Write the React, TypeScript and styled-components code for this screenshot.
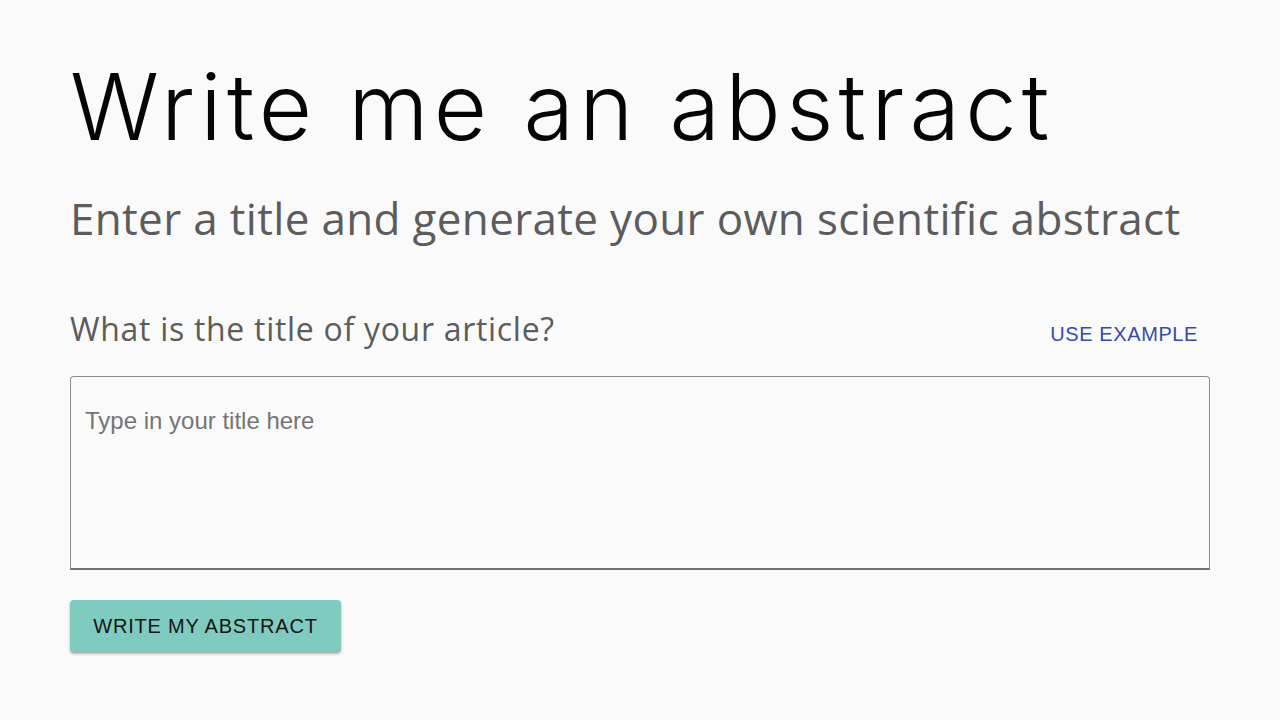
import React from "react";
import styled, { createGlobalStyle } from "styled-components";

const Global = createGlobalStyle`
  html, body { margin: 0; padding: 0; background: #fafafa; }
  body { width: 1280px; height: 720px; overflow: hidden; }
`;

const Page = styled.main`
  box-sizing: border-box;
  width: 1280px;
  height: 720px;
  padding: 52px 70px 0 70px;
  display: flex;
  flex-direction: column;
`;

const Title = styled.h1`
  margin: 0;
  font-family: "Inter", "Lato", sans-serif;
  font-weight: 350;
  font-size: 92px;
  line-height: 110px;
  letter-spacing: 5.2px;
  color: #050505;
`;

const Subtitle = styled.p`
  margin: 29px 0 0 0;
  font-family: "Open Sans", "Noto Sans", sans-serif;
  font-weight: 400;
  font-size: 44px;
  line-height: 54px;
  color: #5c5c5c;
  letter-spacing: 0.33px;
`;

const LabelRow = styled.div`
  margin-top: 64px;
  display: flex;
  align-items: baseline;
  justify-content: space-between;
  padding-right: 12px;
`;

const Label = styled.label`
  font-family: "Open Sans", "Noto Sans", sans-serif;
  font-size: 32px;
  line-height: 40px;
  letter-spacing: 0.7px;
  color: #5c5c5c;
`;

const LinkButton = styled.button`
  background: none;
  border: none;
  padding: 0;
  font-family: "Liberation Sans", Arial, sans-serif;
  font-size: 20px;
  letter-spacing: 0.6px;
  color: #3949ab;
  text-transform: uppercase;
  cursor: pointer;
`;

const Field = styled.textarea`
  margin-top: 27px;
  box-sizing: border-box;
  width: 1140px;
  height: 194px;
  resize: none;
  background: transparent;
  border: 1px solid #8c8c8c;
  border-bottom: 2px solid #707070;
  border-radius: 4px 4px 0 0;
  padding: 30px 14px;
  font-family: "Liberation Sans", Arial, sans-serif;
  font-size: 24px;
  line-height: 28px;
  color: #222;
  outline: none;
  &::placeholder { color: #757575; }
`;

const Submit = styled.button`
  margin-top: 30px;
  align-self: flex-start;
  width: 271px;
  height: 52px;
  border: none;
  border-radius: 4px;
  background: #80cbbf;
  box-shadow: 0 2px 3px rgba(0,0,0,0.25), 0 1px 1px rgba(0,0,0,0.12);
  font-family: "Liberation Sans", Arial, sans-serif;
  font-size: 20px;
  letter-spacing: 0.8px;
  color: #141414;
  text-transform: uppercase;
  cursor: pointer;
`;

export default function App() {
  return (
    <>
      <Global />
      <Page>
        <Title>Write me an abstract</Title>
        <Subtitle>Enter a title and generate your own scientific abstract</Subtitle>
        <LabelRow>
          <Label htmlFor="title">What is the title of your article?</Label>
          <LinkButton>Use example</LinkButton>
        </LabelRow>
        <Field id="title" placeholder="Type in your title here" />
        <Submit>Write my abstract</Submit>
      </Page>
    </>
  );
}
